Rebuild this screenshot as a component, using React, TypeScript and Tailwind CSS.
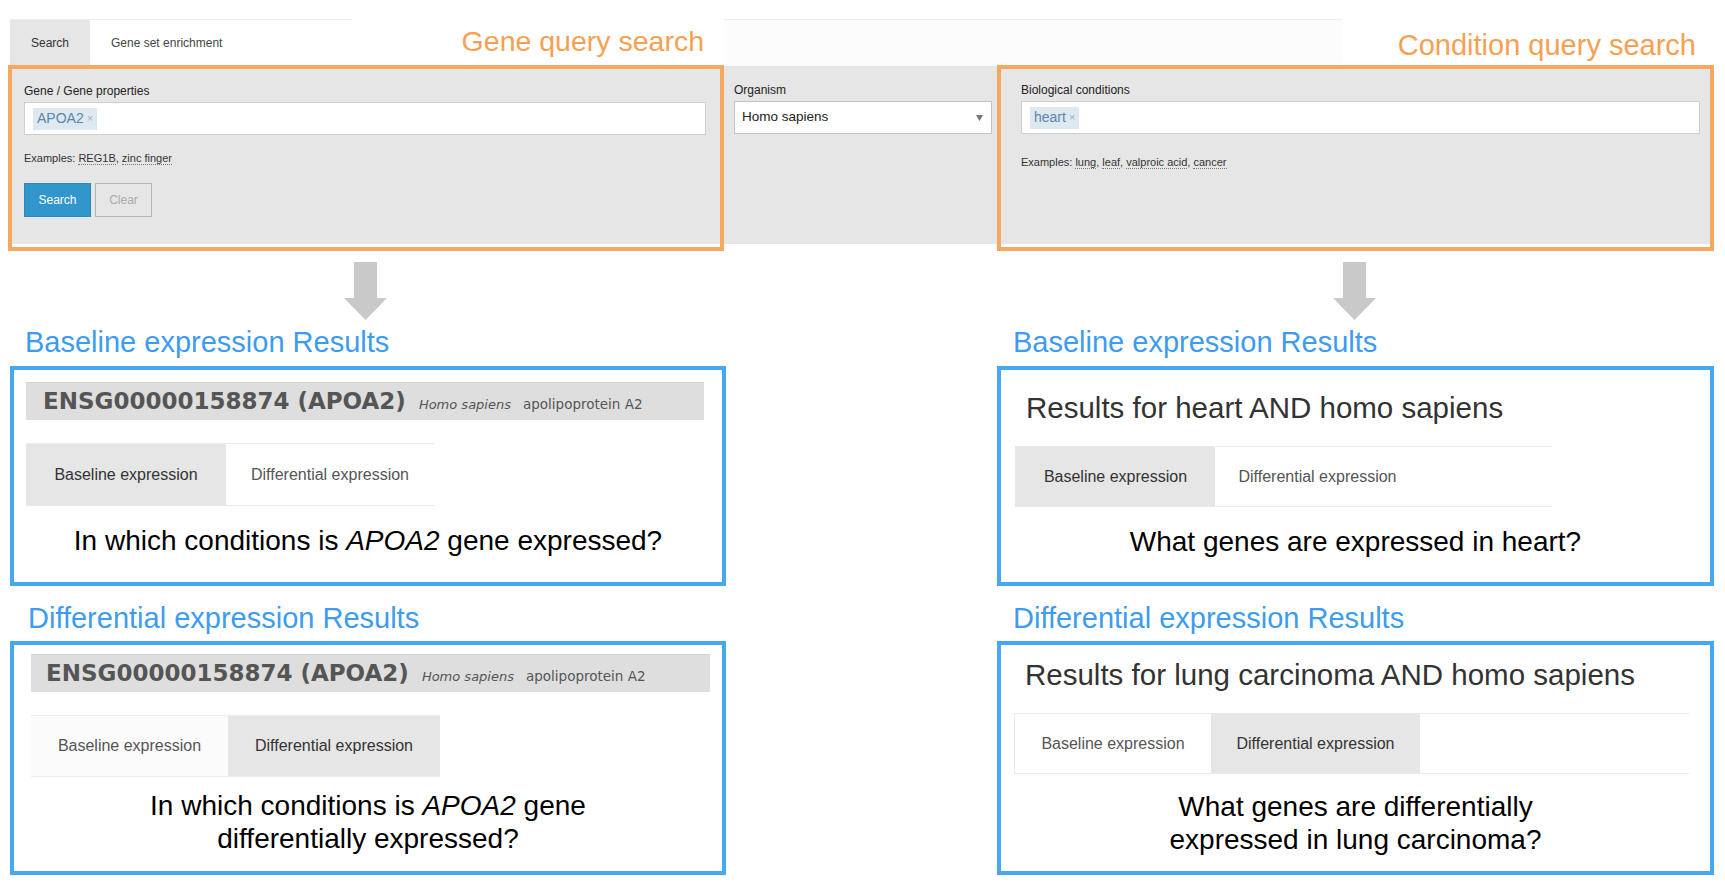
import React from "react";

const sans = "font-['Liberation_Sans',Arial,Helvetica,sans-serif]";
const verdana = "font-['DejaVu_Sans',Verdana,sans-serif]";

const DownArrow: React.FC<{ className?: string }> = ({ className }) => (
  <svg width="43" height="58" viewBox="0 0 43 58" className={className}>
    <rect x="10" y="0" width="23" height="37" fill="#c9c9c9" />
    <polygon points="0,36 43,36 21.5,58" fill="#c9c9c9" />
  </svg>
);

const Tag: React.FC<{ label: string }> = ({ label }) => (
  <div className="ml-[8px] h-[22px] px-[4px] bg-[#dde8f1] flex items-center text-[14px] text-[#5a86ab]">
    {label}
    <span className="ml-[3px] text-[11px] text-[#9fb4c6]">×</span>
  </div>
);

const Example: React.FC<{ children: React.ReactNode }> = ({ children }) => (
  <span className="border-b border-dotted border-[#777] leading-[11px]">{children}</span>
);

const GeneHeader: React.FC<{ className: string }> = ({ className }) => (
  <div className={`h-[38px] bg-[#dedede] border-t border-[#d4d4d4] flex items-center ${className}`}>
    <div className={`flex items-baseline text-[#555] ${verdana}`}>
      <span className="text-[23px] font-bold">ENSG00000158874 (APOA2)</span>
      <span className="ml-[13px] text-[13px] italic">Homo sapiens</span>
      <span className="ml-[12px] text-[13.5px]">apolipoprotein A2</span>
    </div>
  </div>
);

export default function App() {
  return (
    <div className={`w-[1725px] h-[883px] bg-white overflow-hidden ${sans}`}>
      {/* query forms */}
      <div className="flex pl-[8px] pt-[19px]">
        {/* gene query */}
        <div className="w-[716px] flex flex-col">
          <div className="h-[46px] flex">
            <div className="ml-[2px] w-[342px] flex border-t border-[#eeeeee]">
              <div className="w-[80px] bg-[#e6e6e6] flex items-center justify-center text-[12px] text-[#333]">
                Search
              </div>
              <div className="pl-[21px] flex items-center text-[12px] text-[#444]">Gene set enrichment</div>
            </div>
            <div className="ml-auto pr-[20px] pt-[6px] leading-[32px] text-[28.5px] text-[#f6a052]">
              Gene query search
            </div>
          </div>
          <div className="h-[186px] border-4 border-[#f8a85e] bg-white flex flex-col">
            <div className="flex-1 mb-[3px] bg-[#e6e6e6] pl-[12px] pr-[14px] pt-[15px]">
              <div className="text-[12px] leading-[14px] text-[#222]">Gene / Gene properties</div>
              <div className="mt-[4px] h-[33px] bg-white border border-[#cfcfcf] flex items-center">
                <Tag label="APOA2" />
              </div>
              <div className="mt-[17px] text-[11px] leading-[13px] text-[#333]">
                Examples: <Example>REG1B</Example>, <Example>zinc finger</Example>
              </div>
              <div className="mt-[18px] flex gap-[4px]">
                <div className="w-[67px] h-[34px] bg-[#3096cb] border border-[#2a88ba] flex items-center justify-center text-[12px] text-white">
                  Search
                </div>
                <div className="w-[57px] h-[34px] border border-[#b5b5b5] flex items-center justify-center text-[12px] text-[#aaa]">
                  Clear
                </div>
              </div>
            </div>
          </div>
        </div>

        {/* organism */}
        <div className="w-[273px] flex flex-col">
          <div className="h-[47px] border-t border-[#eeeeee] bg-[#fcfcfc]" />
          <div className="h-[178px] bg-[#e6e6e6] pl-[10px] pt-[17px]">
            <div className="text-[12px] leading-[14px] text-[#222]">Organism</div>
            <div className="mt-[4px] w-[258px] h-[33px] bg-white border border-[#c4c4c4] flex items-center pl-[7px] pr-[8px]">
              <span className="text-[13.5px] text-[#222]">Homo sapiens</span>
              <svg width="7" height="6" viewBox="0 0 7 6" className="ml-auto">
                <polygon points="0,0 7,0 3.5,6" fill="#777" />
              </svg>
            </div>
          </div>
        </div>

        {/* condition query */}
        <div className="w-[717px] flex flex-col">
          <div className="h-[46px] flex">
            <div className="w-[345px] border-t border-[#eeeeee] bg-[#fcfcfc]" />
            <div className="ml-auto pr-[18px] pt-[10px] leading-[32px] text-[29px] text-[#f6a052]">
              Condition query search
            </div>
          </div>
          <div className="h-[186px] border-4 border-[#f8a85e] bg-white flex flex-col">
            <div className="flex-1 mb-[3px] bg-[#e6e6e6] pl-[20px] pr-[10px] pt-[14px]">
              <div className="text-[12px] leading-[14px] text-[#222]">Biological conditions</div>
              <div className="mt-[4px] h-[33px] bg-white border border-[#cfcfcf] flex items-center">
                <Tag label="heart" />
              </div>
              <div className="mt-[22px] text-[11px] leading-[13px] text-[#333]">
                Examples: <Example>lung</Example>, <Example>leaf</Example>, <Example>valproic acid</Example>,{" "}
                <Example>cancer</Example>
              </div>
            </div>
          </div>
        </div>
      </div>

      {/* results */}
      <div className="flex pl-[10px] pt-[11px]">
        {/* gene results */}
        <div className="w-[716px] flex flex-col">
          <DownArrow className="ml-[334px]" />
          <div className="mt-[6px] ml-[15px] text-[29px] leading-[32px] text-[#3d9cef]">Baseline expression Results</div>
          <div className="mt-[8px] h-[220px] border-4 border-[#47a8f2] flex flex-col">
            <GeneHeader className="mt-[12px] ml-[12px] mr-[18px] pl-[17px]" />
            <div className="mt-[23px] ml-[12px] w-[408px] h-[63px] border-y border-[#e9e9e9] flex text-[16px]">
              <div className="w-[200px] bg-[#e6e6e6] flex items-center justify-center text-[#333]">Baseline expression</div>
              <div className="w-[208px] flex items-center justify-center text-[#555]">Differential expression</div>
            </div>
            <div className="mt-[20px] text-center text-[28px] leading-[30px] text-black">
              In which conditions is <i>APOA2</i> gene expressed?
            </div>
          </div>

          <div className="mt-[16px] ml-[18px] text-[29px] leading-[32px] text-[#3d9cef]">
            Differential expression Results
          </div>
          <div className="mt-[7px] h-[234px] border-4 border-[#47a8f2] flex flex-col">
            <GeneHeader className="mt-[9px] ml-[17px] mr-[12px] pl-[15px]" />
            <div className="mt-[23px] ml-[17px] w-[409px] h-[62px] border-y border-[#ececec] flex text-[16px]">
              <div className="w-[197px] bg-[#fbfbfb] flex items-center justify-center text-[#555]">Baseline expression</div>
              <div className="w-[212px] bg-[#e6e6e6] flex items-center justify-center text-[#333]">
                Differential expression
              </div>
            </div>
            <div className="mt-[12px] text-center text-[28px] leading-[33px] text-black">
              In which conditions is <i>APOA2</i> gene
              <br />
              differentially expressed?
            </div>
          </div>
        </div>

        {/* condition results */}
        <div className="ml-[271px] w-[717px] flex flex-col">
          <DownArrow className="ml-[336px]" />
          <div className="mt-[6px] ml-[16px] text-[29px] leading-[32px] text-[#3d9cef]">Baseline expression Results</div>
          <div className="mt-[8px] h-[220px] border-4 border-[#47a8f2] flex flex-col">
            <div className="mt-[21px] pl-[25px] text-[29.5px] leading-[34px] text-[#333]">
              Results for heart AND homo sapiens
            </div>
            <div className="mt-[21px] ml-[14px] w-[537px] h-[61px] border-y border-l border-[#e9e9e9] flex text-[16px]">
              <div className="w-[199px] bg-[#e6e6e6] flex items-center justify-center text-[#333]">Baseline expression</div>
              <div className="w-[205px] flex items-center justify-center text-[#555]">Differential expression</div>
            </div>
            <div className="mt-[20px] text-center text-[28px] leading-[30px] text-black">
              What genes are expressed in heart?
            </div>
          </div>

          <div className="mt-[16px] ml-[16px] text-[29px] leading-[32px] text-[#3d9cef]">
            Differential expression Results
          </div>
          <div className="mt-[7px] h-[234px] border-4 border-[#47a8f2] flex flex-col">
            <div className="mt-[13px] pl-[24px] text-[29.5px] leading-[34px] text-[#333]">
              Results for lung carcinoma AND homo sapiens
            </div>
            <div className="mt-[21px] ml-[13px] w-[675px] h-[61px] border-y border-l border-[#e9e9e9] flex text-[16px]">
              <div className="w-[196px] bg-white flex items-center justify-center text-[#555]">Baseline expression</div>
              <div className="w-[209px] bg-[#e6e6e6] flex items-center justify-center text-[#333]">
                Differential expression
              </div>
            </div>
            <div className="mt-[16px] text-center text-[28px] leading-[33px] text-black">
              What genes are differentially
              <br />
              expressed in lung carcinoma?
            </div>
          </div>
        </div>
      </div>
    </div>
  );
}
